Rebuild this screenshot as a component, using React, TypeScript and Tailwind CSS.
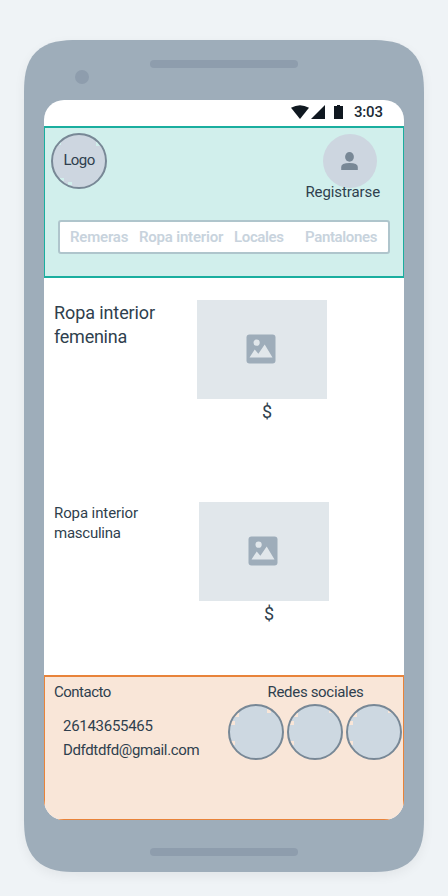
import React from "react";

type Notch = [number, number, number, number];

function Disc({ notches, fill, children }: { notches: Notch[]; fill: string; children?: React.ReactNode }) {
  return (
    <div className="relative flex size-14 shrink-0 items-center justify-center">
      <svg viewBox="0 0 56 56" className="absolute inset-0 size-14">
        <circle cx="28" cy="28" r="27" fill={fill} />
        {notches.map(([x, y, w, h]) => (
          <rect key={`${x}-${y}`} x={x} y={y} width={w} height={h} className="fill-current" />
        ))}
        <circle cx="28" cy="28" r="27" fill="none" stroke="#788896" strokeWidth="2" />
      </svg>
      {children}
    </div>
  );
}

function Placeholder() {
  return (
    <div className="flex h-[99px] w-[130px] items-center justify-center bg-[#e1e7eb] pb-px pr-[1.5px]">
      <svg viewBox="0 0 30 30" className="size-[30px]">
        <rect x="0.5" y="0.5" width="29" height="29" rx="3" fill="#9eadba" />
        <circle cx="10.6" cy="8.7" r="3.1" fill="#e1e7eb" />
        <path d="M3.5 23.5 8.7 15.5l3.7 4.3 6.3-9.2 7.8 12.9Z" fill="#e1e7eb" />
      </svg>
    </div>
  );
}

const leftNotches: Notch[] = [[7, 9, 4, 4], [3, 17, 4, 4], [3, 37, 4, 4]];

export default function App() {
  return (
    <div className="flex h-[896px] w-[448px] justify-center overflow-hidden bg-[#eff3f6] pt-10 font-['Roboto',sans-serif] text-[15px] text-[#2f3f4e]">
      <div className="flex h-[832px] w-[400px] flex-col rounded-[54px] bg-[#9eadba] px-5 shadow-[0_4px_12px_rgba(0,0,0,0.06)] [corner-shape:superellipse(1.46)]">
        <div className="flex h-[60px] shrink-0">
          <div className="ml-[31px] mt-[30px] size-3.5 rounded-full bg-[#8e9dad]" />
          <div className="ml-[61px] mt-5 h-2 w-[148px] rounded-full bg-[#8e9dad]" />
        </div>

        <div className="flex h-[720px] w-[360px] shrink-0 flex-col overflow-hidden rounded-[20px] bg-white">
          <div className="flex h-[26px] shrink-0 items-start pl-[247px] pt-[5px] text-[#202b35]">
            <svg viewBox="0 0 54 16" className="h-4 w-[54px]" fill="#101820">
              <path d="M0 2.7Q9-2.3 18 2.7L9 14Z" />
              <path d="M34 0v14H20Z" />
              <path d="M43 1h3V0h3v1h3v13h-9Z" />
            </svg>
            <span className="-mt-[6px] ml-[9px] text-[15px] font-medium leading-[26px] tracking-[-0.2px]">3:03</span>
          </div>

          <header className="-mx-px flex h-[152px] shrink-0 flex-col border-2 border-[#1aae9f] bg-[#d1efec]">
            <div className="flex h-[92px] shrink-0 justify-between pl-1.5 pr-[23px] pt-[5px]">
              <div className="text-[#d1efec]">
                <Disc fill="#cdd6e0" notches={[[45, 9, 4, 4], [7, 9, 3, 3], [9, 45, 4, 3], [17, 49, 4, 3]]}>
                  <span className="relative -mt-0.5 text-[15px] leading-5 tracking-[-0.6px] text-[#2f3f4e]">Logo</span>
                </Disc>
              </div>
              <div className="flex w-[75px] flex-col items-end">
                <div className="mr-[3px] mt-px flex size-[54px] items-center justify-center rounded-full bg-[#cdd6e0] pr-px">
                  <svg viewBox="0 0 17 18" className="h-[18px] w-[17px]" fill="#788896">
                    <ellipse cx="8.5" cy="4.9" rx="4.4" ry="4.8" />
                    <path d="M0.2 17.9v-3Q0.2 11 8.5 11t8.3 3.9v3Z" />
                  </svg>
                </div>
                <span className="relative -mt-1.5 whitespace-nowrap text-[15px] leading-5 tracking-[-0.1px]">Registrarse</span>
              </div>
            </div>
            <nav className="ml-[13px] flex h-[34px] w-[332px] items-center rounded-[3px] border-2 border-[#afc5cc] bg-white pl-2.5 text-[15px] font-semibold leading-5 text-[#c8d3dd]">
              <span className="w-[69px] shrink-0 tracking-[-0.2px]">Remeras</span>
              <span className="w-[95px] shrink-0 whitespace-nowrap tracking-[-0.2px]">Ropa interior</span>
              <span className="w-[71px] shrink-0 tracking-[-0.35px]">Locales</span>
              <span className="shrink-0 tracking-[-0.35px]">Pantalones</span>
            </nav>
          </header>

          <main className="flex h-[397px] shrink-0 flex-col pl-2.5 pt-[22px]">
            <section className="flex h-[202px] shrink-0">
              <h2 className="w-[143px] shrink-0 pt-px text-[18px] leading-6 tracking-[-0.1px]">Ropa interior<br /><span className="tracking-[-0.25px]">femenina</span></h2>
              <div className="flex flex-col items-center">
                <Placeholder />
                <span className="ml-[10px] mt-px text-[18px] leading-6">$</span>
              </div>
            </section>
            <section className="flex shrink-0">
              <h2 className="w-[145px] shrink-0 pt-px text-[15px] leading-5 tracking-[-0.1px]">Ropa interior<br /><span className="tracking-[-0.25px]">masculina</span></h2>
              <div className="flex flex-col items-center">
                <Placeholder />
                <span className="ml-[10px] mt-px text-[18px] leading-6">$</span>
              </div>
            </section>
          </main>

          <footer className="-mx-px flex h-[146px] shrink-0 border-2 border-[#e8833a] bg-[#f9e6d8] pl-[9px] pt-[5px]">
            <div className="w-[174px] shrink-0 text-[15px]">
              <h3 className="leading-5 tracking-[-0.5px]">Contacto</h3>
              <div className="ml-[9px] mt-3 leading-6">
                <p className="tracking-[-0.28px]">26143655465</p>
                <p className="tracking-[-0.36px]">Ddfdtdfd@gmail.com</p>
              </div>
            </div>
            <div className="w-[175px] shrink-0">
              <h3 className="text-center leading-5 tracking-[-0.32px]">Redes sociales</h3>
              <div className="mt-0.5 flex gap-[3px] text-[#f9e6d8]">
                <Disc fill="#cdd8e1" notches={[[39, 5, 4, 4], ...leftNotches]} />
                <Disc fill="#cdd8e1" notches={[[42, 6, 4, 3], ...leftNotches]} />
                <Disc fill="#cdd8e1" notches={[[42, 6, 4, 3], ...leftNotches]} />
              </div>
            </div>
          </footer>
        </div>

        <div className="mx-auto mt-7 h-2 w-[148px] shrink-0 rounded-full bg-[#8e9dad]" />
      </div>
    </div>
  );
}
